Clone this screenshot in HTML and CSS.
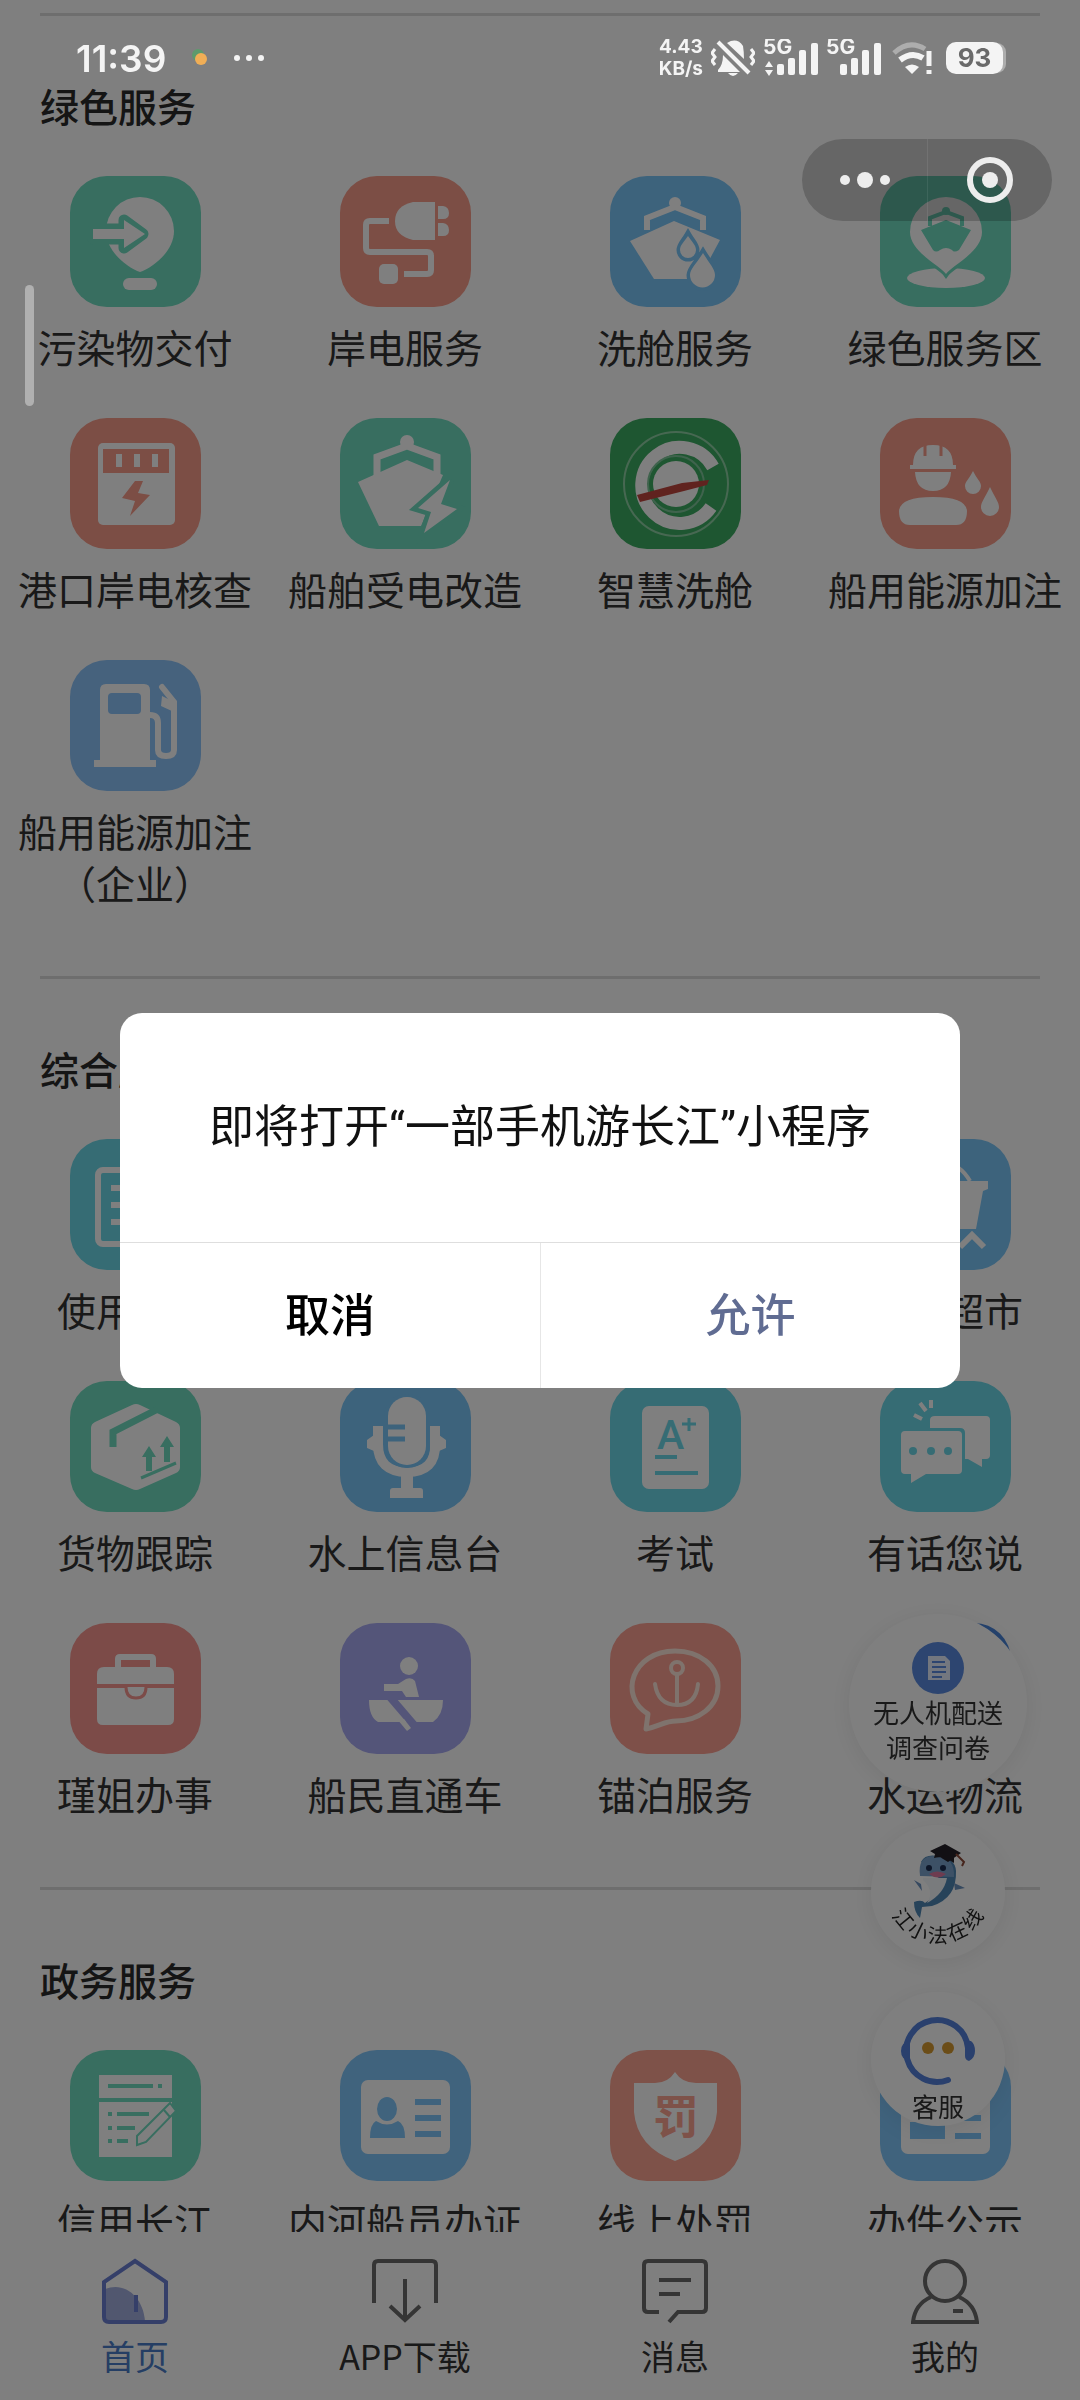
FILE: index.html
```html
<!DOCTYPE html>
<html lang="zh-CN">
<head>
<meta charset="utf-8">
<meta name="viewport" content="width=device-width, initial-scale=1">
<title>首页</title>
<link rel="stylesheet" href="styles.css">
</head>
<body>
<div class="app">
  <main class="content">
    <section class="group">
      <h2 class="group-title">绿色服务</h2>
      <div class="grid">
        <a class="item" href="#"><span class="tile green"><svg viewBox="0 0 131 131"><path d="M70 96C58 92 36 76 36 55a34 34 0 0 1 68 0C104 76 82 92 70 96Z"/><path class="c cs" stroke-width="11" stroke-linejoin="round" d="M23 53H54V44L73 58L54 72V63H23Z"/><path d="M23 53H54V44L75 58L54 72V63H23Z"/><rect x="53" y="102" width="34" height="12" rx="6"/></svg></span>污染物交付</a>
        <a class="item" href="#"><span class="tile red"><svg viewBox="0 0 131 131"><path class="s" stroke-width="6" d="M49 45H30Q26 45 26 49V72Q26 76 30 76H87Q91 76 91 80V94Q91 98 87 98H64"/><rect x="39" y="88" width="19" height="20" rx="5"/><path d="M95 26V64H73Q55 60 55 45T73 26Z"/><path d="M98 30H103Q109 31 109 37T103 43H98ZM98 47H103Q109 48 109 54T103 60H98Z"/></svg></span>岸电服务</a>
        <a class="item" href="#"><span class="tile blue"><svg viewBox="0 0 131 131"><circle cx="65" cy="27" r="6"/><path class="s" stroke-width="6" d="M37 54V42L65 31L93 42V54"/><path d="M20 65L64 45L110 64L89 103H44Z"/><path class="cs c" stroke-width="7" d="M78 59C82 66 86 69 86 74a8 8 0 0 1-16 0C70 69 74 66 78 59ZM93 77C99 87 105 93 105 99a12 12 0 0 1-25 0C80 93 87 87 93 77Z"/><path d="M78 60C82 66 86 69 86 74a8 8 0 0 1-16 0C70 69 74 66 78 60ZM93 77C99 87 105 93 105 99a12 12 0 0 1-25 0C80 93 87 87 93 77Z"/></svg></span>洗舱服务</a>
        <a class="item" href="#"><span class="tile green"><svg viewBox="0 0 131 131"><ellipse cx="66" cy="102" rx="39" ry="10"/><path class="c cs" stroke-width="7" d="M66 97C61 90 30 76 30 55H102C102 76 71 90 66 97Z"/><path d="M66 98C61 90 30 76 30 56a36 35 0 0 1 72 0C102 76 71 90 66 98Z"/><circle class="c" cx="66" cy="35" r="4"/><path class="cs" fill="none" stroke-width="4" d="M50 50V42L66 36L82 42V50"/><path class="c" d="M41 54L66 44L91 54L79 74Q74 77 72 74Q66 70 60 74Q56 77 53 74Z"/></svg></span>绿色服务区</a>
        <a class="item" href="#"><span class="tile red"><svg viewBox="0 0 131 131"><rect x="28" y="25" width="77" height="82" rx="5"/><path class="c" d="M33 31H99V55H33ZM65 63H73L68 75L80 77L60 98L65 83L52 80Z"/><path d="M46 36H52V49H46ZM64 36H70V49H64ZM82 36H88V49H82Z"/></svg></span>港口岸电核查</a>
        <a class="item" href="#"><span class="tile green"><svg viewBox="0 0 131 131"><circle cx="67" cy="24" r="7"/><path class="s" stroke-width="7" d="M37 60V39L67 28L97 39V58"/><path d="M18 64L67 42L103 57L81 108H39Z"/><path class="c cs" stroke-width="9" d="M110 62L78 90L91 94L84 115L117 91L101 86Z"/><path d="M110 62L78 90L91 94L84 115L117 91L101 86Z"/></svg></span>船舶受电改造</a>
        <a class="item" href="#"><span class="tile deep"><svg viewBox="0 0 131 131"><circle cx="66" cy="66" r="52" fill="none" stroke="#8fd0a4" stroke-width="2"/><path class="s" stroke-width="13" d="M103 49A38 38 0 1 0 101 89"/><circle cx="66" cy="66" r="28" fill="none" stroke="#7fc69a" stroke-width="2"/><circle cx="66" cy="66" r="23"/><path fill="#c0463f" d="M27 77L72 65L99 62L97 67L74 73L30 84Z"/></svg></span>智慧洗舱</a>
        <a class="item" href="#"><span class="tile red"><svg viewBox="0 0 131 131"><path d="M33 47Q33 27 53 27T73 47H76V51H30V47ZM35 54H71Q70 73 53 73T35 54Z"/><path class="cs" stroke-width="3" d="M45 27V38M61 27V38"/><path d="M19 93Q20 79 53 79T87 93Q87 107 76 107H30Q19 107 19 93Z"/><path d="M93 53C97 61 101 64 101 68a8 8 0 0 1-16 0C85 64 89 61 93 53ZM110 69C115 80 119 84 119 89a9 9 0 0 1-18 0C101 84 105 80 110 69Z"/></svg></span>船用能源加注</a>
        <a class="item" href="#"><span class="tile steel"><svg viewBox="0 0 131 131"><path d="M36 24H74Q80 24 80 30V100H86V107H24V100H30V30Q30 24 36 24Z"/><rect class="c" x="38" y="33" width="33" height="21" rx="4"/><path class="s" stroke-width="6" stroke-linecap="round" d="M80 55Q88 55 88 63V90Q88 96 96 96T104 90V42L92 27"/><path d="M92 36L104 42V52L91 46Z"/></svg></span>船用能源加注（企业）</a>
      </div>
    </section>

    <section class="group">
      <h2 class="group-title">综合服务</h2>
      <div class="grid">
        <a class="item" href="#"><span class="tile teal"><svg viewBox="0 0 131 131"><rect class="s" x="28" y="31" width="75" height="74" rx="5" stroke-width="6"/><path class="s" stroke-width="6" d="M41 49H88M41 66H88M41 83H88"/></svg></span>使用指南</a>
        <a class="item last" href="#"><span class="tile blue"><svg viewBox="0 0 131 131"><path class="s" stroke-width="4" d="M50 42Q52 25 66 25T90 42"/><path d="M24 42H108V50L103 52L96 90H36Z"/><path class="s" stroke-width="6" d="M80 108L92 96L104 108"/></svg></span>水上超市</a>
        <a class="item" href="#"><span class="tile green"><svg viewBox="0 0 131 131"><path d="M25 41L62 24Q66 22 70 24L106 41Q110 43 110 47V86Q110 90 106 92L70 108Q66 110 62 108L25 92Q21 90 21 86V47Q21 43 25 41Z"/><path class="cs" fill="none" stroke-width="7" d="M88 28L43 51V66"/><path class="c" d="M79 65L86 76H82V90H76V76H72ZM97 55L104 66H100V81H94V66H90Z"/><path class="cs" stroke-width="3" d="M71 97L106 82"/></svg></span>货物跟踪</a>
        <a class="item" href="#"><span class="tile blue"><svg viewBox="0 0 131 131"><path class="s" stroke-width="10" d="M38 45V63Q38 91 67 91T95 63V45"/><path d="M27 59L34 54V70L27 67ZM106 59L99 54V70L106 67Z"/><rect class="c" x="44" y="13" width="46" height="74" rx="22"/><rect x="48" y="16" width="38" height="68" rx="19"/><path class="cs" stroke-width="5" d="M46 46H65M46 58H65"/><path d="M61 92H73V107H80Q83 107 83 110V117H50V110Q50 107 53 107H61Z"/></svg></span>水上信息台</a>
        <a class="item" href="#"><span class="tile teal"><svg viewBox="0 0 131 131"><rect x="32" y="25" width="67" height="83" rx="7"/><text class="c icon-a" x="47" y="68">A</text><path class="cs" stroke-width="3" d="M79 37V50M72 43H86"/><path class="cs" stroke-width="4" d="M45 76H67M45 92H88"/></svg></span>考试</a>
        <a class="item" href="#"><span class="tile teal"><svg viewBox="0 0 131 131"><path d="M55 35H106Q110 35 110 39V74Q110 78 106 78H102V86L88 78H60V50H50V39Q50 35 55 35Z"/><path class="c" d="M21 47H80Q85 47 85 52V96H21Z"/><path d="M25 50H78Q82 50 82 54V89Q82 93 78 93H46L31 102V93H25Q21 93 21 89V54Q21 50 25 50Z"/><circle class="c" cx="33" cy="70" r="4"/><circle class="c" cx="51" cy="70" r="4"/><circle class="c" cx="68" cy="70" r="4"/><path class="s" stroke-width="4" d="M34 34L42 38M40 22L46 30M51 19V27"/></svg></span>有话您说</a>
        <a class="item" href="#"><span class="tile rose"><svg viewBox="0 0 131 131"><path class="s" stroke-width="6" d="M48 46V36Q48 34 50 34H81Q83 34 83 36V46"/><path d="M34 44H97Q104 44 104 51V61H27V51Q27 44 34 44ZM27 65H104V96Q104 102 98 102H33Q27 102 27 96Z"/><path class="cs" fill="#fff" stroke-width="3" d="M56 64Q56 75 66 75T76 64"/></svg></span>瑾姐办事</a>
        <a class="item" href="#"><span class="tile purple"><svg viewBox="0 0 131 131"><circle cx="69" cy="43" r="9"/><path d="M44 61H58L66 56Q72 54 75 58L79 74H66L62 68H44ZM29 77H103Q103 92 93 99H38Q29 94 29 77Z"/><path class="cs" stroke-width="8" d="M50 74L74 102"/><path d="M57 96H64L71 105L67 108Z"/></svg></span>船民直通车</a>
        <a class="item" href="#"><span class="tile coral"><svg class="cream" viewBox="0 0 131 131"><path class="s" stroke-width="5" stroke-linejoin="round" d="M38 91C8 73 22 28 65 28C90 28 108 43 108 63C108 84 88 98 66 98C55 98 50 103 36 106Z"/><circle class="s" cx="67" cy="45" r="6" stroke-width="4"/><path class="s" stroke-width="4" stroke-linecap="round" d="M67 52V82M45 61Q48 82 67 82T88 61"/></svg></span>锚泊服务</a>
        <a class="item" href="#"><span class="tile royal"></span>水运物流</a>
      </div>
    </section>

    <section class="group">
      <h2 class="group-title">政务服务</h2>
      <div class="grid">
        <a class="item" href="#"><span class="tile green"><svg viewBox="0 0 131 131"><path d="M29 25H102V107H29Z"/><path class="cs" stroke-width="4" d="M29 50H102M38 36H83M88 36H92M38 64H42M47 64H79M38 78H42M47 78H65M38 91H42M47 91H58"/><path class="cs" fill="#fff" stroke-width="2" d="M100 53L106 61L76 92L67 95V86Z"/><path class="cs" stroke-width="2" d="M94 60L100 67"/></svg></span>信用长江</a>
        <a class="item" href="#"><span class="tile sky"><svg viewBox="0 0 131 131"><rect x="21" y="30" width="89" height="74" rx="7"/><ellipse class="c" cx="47" cy="59" rx="10" ry="12"/><path class="c" d="M36 71Q47 78 58 71Q65 74 65 88H30Q30 74 36 71Z"/><path class="cs" stroke-width="6" d="M75 52H101M75 68H101M75 84H101"/></svg></span>内河船员办证</a>
        <a class="item" href="#"><span class="tile rose2"><svg viewBox="0 0 131 131"><path d="M65 22Q72 33 86 33H107V62Q104 97 65 111Q27 97 24 62V33H45Q58 33 65 22Z"/><text class="c icon-fa" x="66" y="83">罚</text></svg></span>线上处罚</a>
        <a class="item" href="#"><span class="tile sky"><svg viewBox="0 0 131 131"><rect x="21" y="30" width="89" height="74" rx="7"/><path class="c" d="M30 72H65V89H30Z"/><path class="cs" stroke-width="6" d="M75 52H101M75 68H101M75 86H101"/></svg></span>办件公示</a>
      </div>
    </section>
  </main>

  <nav class="tabbar">
    <a class="tab active" href="#"><svg viewBox="0 0 68 68"><path fill="#a3aede" stroke="none" d="M4 32C24 24 42 40 44 64H4Z"/><path d="M34 4L65 25V60Q65 65 60 65H8Q3 65 3 60V25Z"/><path d="M35 38V55"/></svg>首页</a>
    <a class="tab" href="#"><svg viewBox="0 0 68 68"><path d="M3 46V8Q3 4 7 4H61Q65 4 65 8V46M34 22V62M19 49L34 63L49 49"/></svg>APP下载</a>
    <a class="tab" href="#"><svg viewBox="0 0 68 68"><path d="M18 55H7Q3 55 3 51V8Q3 4 7 4H61Q65 4 65 8V51Q65 55 61 55H37L28 65M18 23H50M18 37H39"/></svg>消息</a>
    <a class="tab" href="#"><svg viewBox="0 0 68 68"><circle cx="34" cy="24" r="20"/><path d="M20 40Q4 47 2 65H66Q64 47 48 40M42 54H52"/></svg>我的</a>
  </nav>

  <aside class="floats">
    <a class="bubble survey" href="#"><svg viewBox="0 0 52 52"><circle cx="26" cy="26" r="26" fill="#5a8ae0"/><path fill="#e6efff" d="M16 14H33L38 19V38H16Z"/><path stroke="#5a8ae0" stroke-width="2" d="M20 20H33M20 25H34M20 30H34M20 35H30"/></svg>无人机配送<br>调查问卷</a>
    <a class="bubble law" href="#"><svg viewBox="0 0 134 134"><path fill="#4e86b4" d="M50 37Q54 29 66 31Q84 32 85 46Q86 73 61 81L51 82L49 93Q43 87 43 77Q51 74 54 78Q67 71 70 55Z"/><path fill="#7ba3cc" d="M49 51Q46 30 65 31Q84 32 83 52Z"/><path fill="#f2f6fa" d="M52 53H76Q73 69 56 78Q64 66 52 55Z"/><path fill="#dd79a0" d="M58 49Q66 44 75 49Q67 56 58 49Z"/><path fill="#6d92bf" d="M83 58L94 63L84 65ZM50 59L43 55L51 66Z"/><circle cx="58" cy="43" r="3" fill="#1b2c50"/><circle cx="72" cy="43" r="3" fill="#1b2c50"/><path fill="#252028" d="M59 26L74 19L90 28L77 37ZM64 29L83 31V38Q72 30 63 33Z"/><path stroke="#8c4a38" stroke-width="2" fill="none" d="M85 29L93 37L91 41"/><path id="arc" fill="none" d="M17 80A52 52 0 0 0 117 80"/><text><textPath href="#arc"><tspan x="21 44 67 90 113">江小法在线</tspan></textPath></text></svg></a>
    <a class="bubble help" href="#"><svg viewBox="0 0 74 74"><path fill="none" stroke="#5480da" stroke-width="6" stroke-linecap="round" d="M67 34A31 31 0 1 0 47 66"/><path fill="#5480da" d="M9 27V47Q0 46 0 37T9 27ZM64 27H70Q74 30 74 37T68 47Q64 46 64 42Z"/><circle cx="27" cy="34" r="6" fill="#d79a30"/><circle cx="47" cy="34" r="6" fill="#d79a30"/></svg>客服</a>
  </aside>
</div>

<div class="mask">
  <div class="dialog" role="dialog" aria-modal="true" aria-labelledby="msg">
    <p class="dialog-text" id="msg">即将打开“一部手机游长江”小程序</p>
    <div class="dialog-actions">
      <button type="button">取消</button>
      <button type="button" class="allow">允许</button>
    </div>
  </div>
</div>

<header class="status">
  <div class="status-left">
    <time>11:39</time>
    <svg width="16" height="20" viewBox="0 0 16 20"><circle cx="6" cy="7" r="6" fill="#5d9a6c"/><circle cx="9" cy="11" r="6" fill="#f0ae56"/></svg>
    <svg width="30" height="8" viewBox="0 0 30 8" fill="#f4f4f4"><circle cx="3" cy="4" r="3"/><circle cx="15" cy="4" r="3"/><circle cx="27" cy="4" r="3"/></svg>
  </div>
  <div class="status-right">
    <span class="speed">4.43<br>KB/s</span>
    <svg width="44" height="38" viewBox="0 0 44 38" fill="#f4f4f4"><path d="M7 31Q12 26 12 16L29 33H7ZM16 4Q26-2 32 7Q33 13 33 20ZM17 34H27Q22 40 17 34Z"/><path d="M7 3L38 34" stroke="#f4f4f4" stroke-width="4"/><path d="M4 10L1 14L4 18L1 22L4 26M40 10L43 14L40 18L43 22L40 26" fill="none" stroke="#f4f4f4" stroke-width="3"/></svg>
    <svg width="55" height="38" viewBox="0 0 55 38" fill="#f4f4f4"><text x="0" y="15">5G</text><path d="M6 22L10 28H2ZM6 37L2 31H10Z"/><rect x="14" y="25" width="7" height="11" rx="2"/><rect x="25" y="19" width="7" height="17" rx="2"/><rect x="36" y="11" width="7" height="25" rx="2"/><rect x="48" y="4" width="7" height="32" rx="2"/></svg>
    <svg width="55" height="38" viewBox="0 0 55 38" fill="#f4f4f4"><text x="0" y="15">5G</text><rect x="14" y="25" width="7" height="11" rx="2"/><rect x="25" y="19" width="7" height="17" rx="2"/><rect x="36" y="11" width="7" height="25" rx="2"/><rect x="48" y="4" width="7" height="32" rx="2"/></svg>
    <svg class="wifi" width="40" height="38" viewBox="0 0 40 38" fill="none"><path d="M2 14Q17 0 33 10" stroke="#adadad" stroke-width="5"/><path d="M8 21Q20 12 31 19" stroke="#f4f4f4" stroke-width="6"/><path d="M13 28Q20 23 27 28L20 35Z" fill="#f4f4f4"/><path d="M37 12V27M37 31V35" stroke="#f4f4f4" stroke-width="5"/></svg>
    <span class="battery">93</span>
  </div>
</header>

<div class="capsule">
  <button type="button" aria-label="更多"><svg width="50" height="18" viewBox="0 0 50 18"><circle cx="5" cy="9" r="5"/><circle cx="25" cy="9" r="8"/><circle cx="45" cy="9" r="5"/></svg></button>
  <button type="button" aria-label="关闭"><svg width="48" height="48" viewBox="0 0 48 48"><circle cx="24" cy="24" r="20" fill="none" stroke="#ededed" stroke-width="6"/><circle cx="24" cy="24" r="8"/></svg></button>
</div>
<div class="edge-handle"></div>
</body>
</html>
```
FILE: styles.css
```css
* { box-sizing: border-box; }

body {
  margin: 0;
  background: #fff;
  color: #333;
  font-family: "Noto Sans CJK SC", sans-serif;
}

a { color: inherit; text-decoration: none; }

button {
  margin: 0;
  padding: 0;
  border: 0;
  background: none;
  font: inherit;
}

svg { display: block; }

.app {
  display: flex;
  flex-direction: column;
  height: 100vh;
}

.content {
  flex: 1;
  min-height: 0;
  overflow: hidden;
  padding-top: 13px;
}

.group { padding-bottom: 68px; }

.group::before {
  content: "";
  display: block;
  height: 3px;
  margin: 0 40px 62px;
  background: #dcdcdc;
}

.group-title {
  margin: 0 40px 44px;
  color: #2b2b2b;
  font-size: 39px;
  line-height: 54px;
  font-weight: 500;
}

.grid {
  display: grid;
  grid-template-columns: repeat(4, 1fr);
  row-gap: 46px;
}

.item {
  display: flex;
  flex-direction: column;
  align-items: center;
  gap: 13px;
  padding: 0 12px;
  font-size: 39px;
  line-height: 52px;
  text-align: center;
}

.item.last { grid-column: 4; }

.tile {
  width: 131px;
  height: 131px;
  border-radius: 37px;
  background: var(--tile);
}

.tile svg { width: 100%; height: 100%; fill: #fff; --ink: #fff; }
.tile .cream { --ink: #ffe6da; }
.tile .c { fill: var(--tile); }
.tile .cs { stroke: var(--tile); }
.tile .s { fill: none; stroke: var(--ink); }

.green { --tile: #70dcc0; }
.red { --tile: #f89c8a; }
.blue { --tile: #7ac6f8; }
.steel { --tile: #8cc4fa; }
.teal { --tile: #6cd8e8; }
.deep { --tile: #3cac62; }
.rose { --tile: #f89690; }
.rose2 { --tile: #fca492; }
.coral { --tile: #fca092; }
.purple { --tile: #a8aaf2; }
.sky { --tile: #80c6fa; }
.royal { --tile: #4a86dc; }

.icon-a { font: 500 41px Roboto, sans-serif; }
.icon-fa { font-size: 46px; font-weight: 700; text-anchor: middle; }

.tabbar {
  display: grid;
  grid-template-columns: repeat(4, 1fr);
  height: 168px;
  padding-top: 25px;
  background: #fff;
}

.tab {
  display: flex;
  flex-direction: column;
  align-items: center;
  gap: 7px;
  font-size: 34px;
  line-height: 48px;
}

.tab svg {
  width: 68px;
  height: 68px;
  fill: none;
  stroke: #6a6a6a;
  stroke-width: 4;
}

.tab.active { color: #4a7cc8; }
.tab.active svg { stroke: #6a7fd2; }

.floats {
  position: fixed;
  right: 53px;
  bottom: 274px;
  display: flex;
  flex-direction: column;
  align-items: center;
  gap: 33px;
}

.bubble {
  display: flex;
  flex-direction: column;
  align-items: center;
  width: 134px;
  height: 134px;
  border-radius: 50%;
  background: #fff;
  box-shadow: 0 4px 24px rgba(0, 0, 0, .08);
  font-size: 26px;
  line-height: 35px;
  text-align: center;
}

.survey { width: 178px; height: 178px; padding-top: 28px; }
.survey svg { width: 52px; height: 52px; }
.law svg { width: 134px; height: 134px; }
.law text { font-size: 20px; text-anchor: middle; fill: #222; }
.help { padding-top: 22px; }
.help svg { width: 74px; height: 74px; }

.mask {
  position: fixed;
  inset: 0;
  display: flex;
  align-items: center;
  justify-content: center;
  padding: 0 120px;
  background: rgba(0, 0, 0, .5);
}

.dialog {
  flex: 1;
  overflow: hidden;
  border-radius: 22px;
  background: #fff;
  color: #111;
  font-size: 45px;
  line-height: 65px;
  text-align: center;
}

.dialog-text {
  margin: 0;
  padding: 82px 40px;
  font-family: Roboto, "Noto Sans CJK SC", sans-serif;
}

.dialog-actions {
  display: grid;
  grid-template-columns: 1fr 1fr;
  border-top: 1px solid #dedede;
}

.dialog-actions button { padding: 37px 0 43px; color: #000; font-weight: 500; }
.dialog-actions .allow { border-left: 1px solid #e6e6e6; color: #606c92; }

.status {
  position: fixed;
  inset: 0 0 auto;
  display: flex;
  align-items: center;
  justify-content: space-between;
  padding: 0 77px 0 76px;
  height: 116px;
  color: #f4f4f4;
  font-family: Inter, sans-serif;
}

.status-left, .status-right { display: flex; align-items: center; }
.status-left { gap: 26px; }
.status-left time { font-size: 37px; font-weight: 600; }
.status-right { gap: 8px; }
.status-right text { font-size: 21px; font-weight: 700; }
.speed { font-size: 19px; line-height: 22px; font-weight: 700; text-align: center; }

.battery {
  width: 57px;
  height: 32px;
  margin-left: 6px;
  border-radius: 10px;
  background: #f4f4f4;
  box-shadow: 4px 0 0 -1px #adadad;
  color: #6a6a6a;
  font-size: 26px;
  line-height: 32px;
  font-weight: 700;
  text-align: center;
}

.wifi { margin-left: 3px; }

.capsule {
  position: fixed;
  top: 139px;
  right: 28px;
  display: grid;
  grid-template-columns: 1fr 1fr;
  width: 250px;
  height: 82px;
  border-radius: 41px;
  background: rgba(0, 0, 0, .2);
}

.capsule button { display: flex; align-items: center; justify-content: center; }
.capsule button + button { border-left: 1px solid rgba(255, 255, 255, .08); }
.capsule svg { fill: #ededed; }

.edge-handle {
  position: fixed;
  top: 285px;
  left: 25px;
  width: 9px;
  height: 121px;
  border-radius: 5px;
  background: #b0b0b0;
}
```
